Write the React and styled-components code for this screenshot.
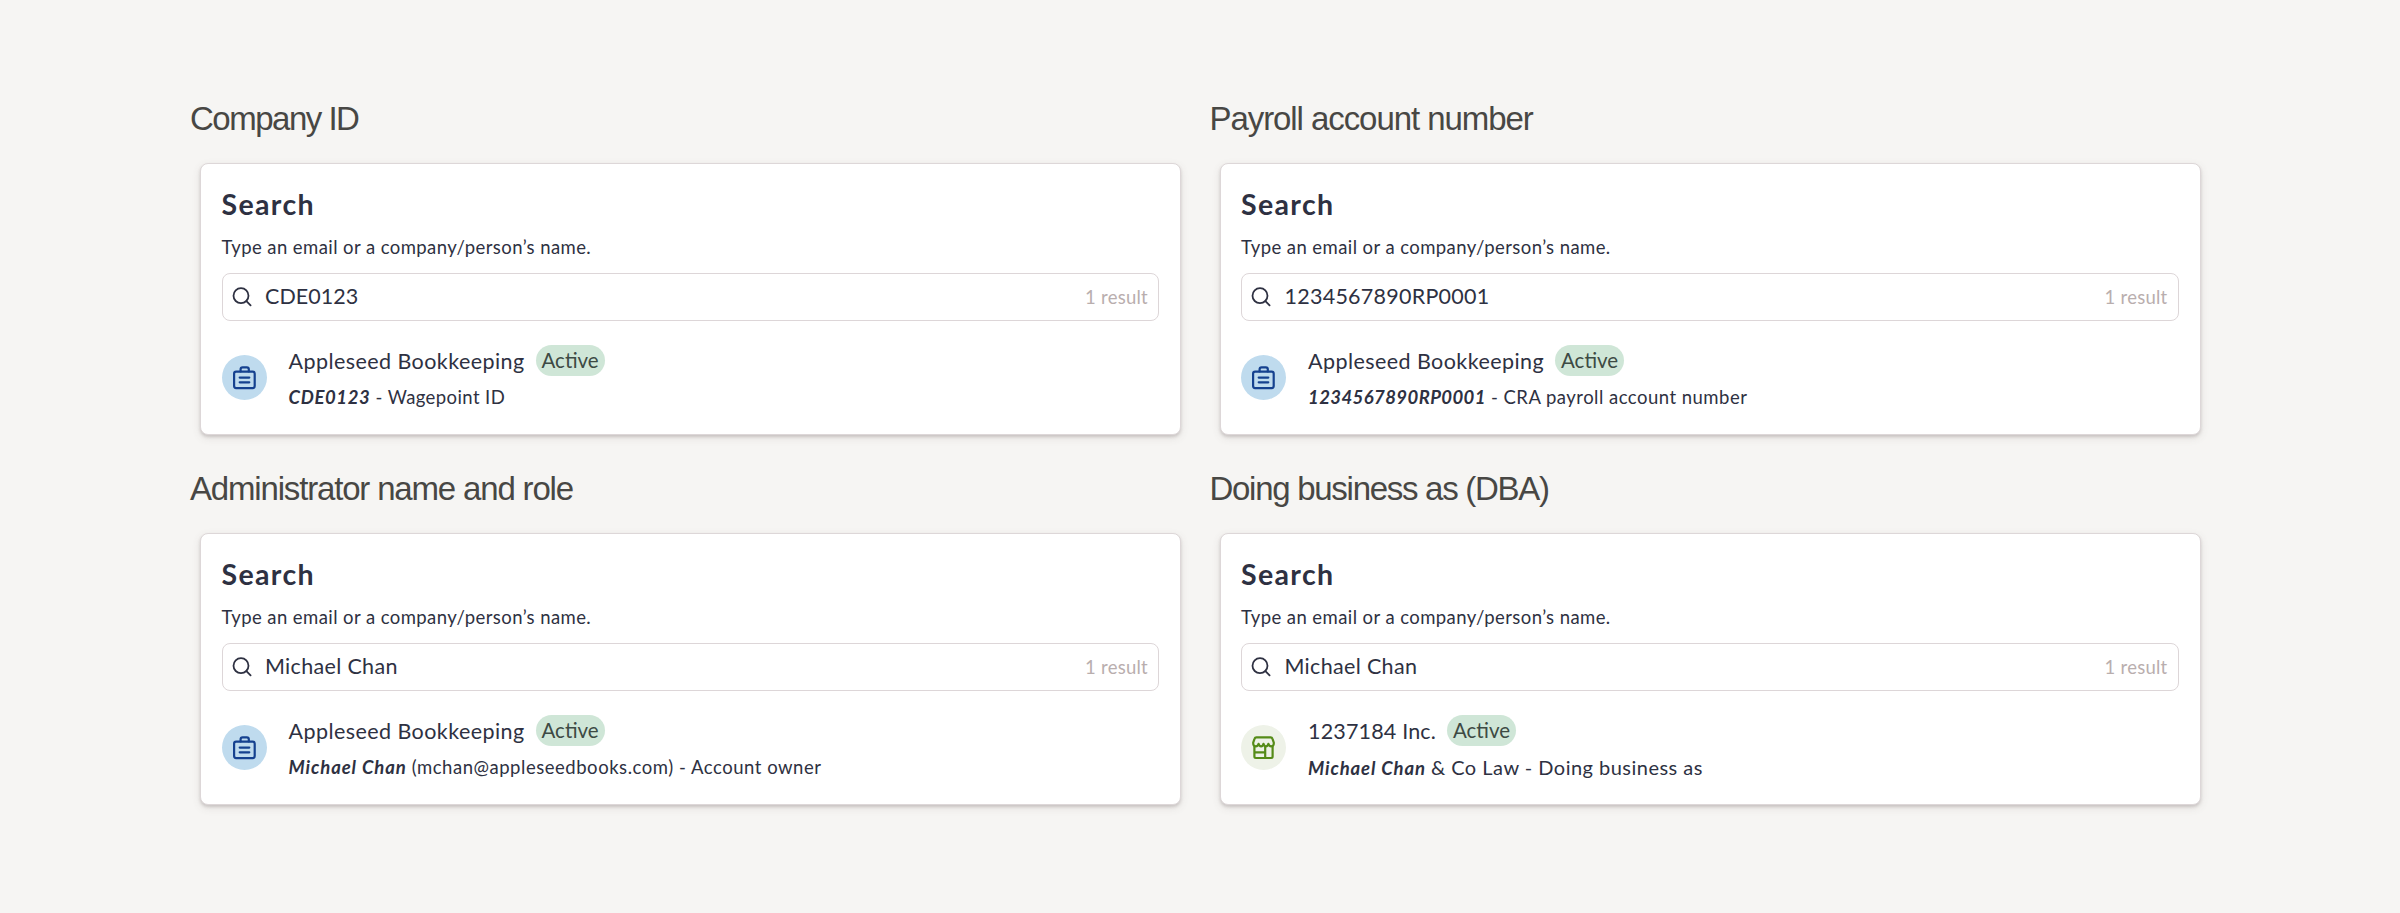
import React from 'react';
import styled, { createGlobalStyle } from 'styled-components';

const GlobalStyle = createGlobalStyle`
  * { box-sizing: border-box; }
  body { margin: 0; background: #f6f5f3; }
`;

const Page = styled.main`
  min-height: 913px;
  padding: 99px 0 0 190px;
  display: grid;
  grid-template-columns: 1019.5px 1019.5px;
  align-content: start;
  row-gap: 34px;
  background: #f6f5f3;
  color: #2e3142;
  font-family: Lato, 'Open Sans', sans-serif;
`;

const Example = styled.section`
  display: flex;
  flex-direction: column;
  gap: 24px;
`;

const ExampleTitle = styled.h2`
  margin: 0;
  font: 400 33px/40px 'Liberation Sans', sans-serif;
  letter-spacing: ${(p) => p.$tracking}px;
  color: #484744;
  white-space: nowrap;
`;

const Card = styled.article`
  width: 981px;
  height: 272px;
  margin-left: 10px;
  padding: 23.5px 21px 0 20.5px;
  display: flex;
  flex-direction: column;
  background: #fff;
  border: 1px solid #ddd7d8;
  border-radius: 8px;
  box-shadow: 0 2px 3px rgba(90, 75, 75, 0.2), 0 3px 9px rgba(90, 75, 75, 0.12);
`;

const Heading = styled.h3`
  margin: 0;
  font-size: 28.5px;
  line-height: 32px;
  font-weight: 700;
  letter-spacing: 1.35px;
`;

const Hint = styled.p`
  margin: 15.5px 0 14px;
  font-size: 18.5px;
  line-height: 24px;
  letter-spacing: 0.42px;
`;

const SearchField = styled.div`
  height: 48px;
  flex: none;
  padding: 0 10px 0 9px;
  display: flex;
  align-items: center;
  border: 1.5px solid #ddd6d8;
  border-radius: 8px;
`;

const Query = styled.span`
  flex: 1;
  margin-left: 13.5px;
  padding-bottom: 2px;
  font-size: 21.5px;
  line-height: 26px;
  letter-spacing: ${(p) => p.$tracking}px;
`;

const Count = styled.span`
  font-size: 18.5px;
  letter-spacing: 0.25px;
  color: #b9aeae;
`;

const Result = styled.div`
  margin-top: 24px;
  display: flex;
  gap: 22px;
`;

const Avatar = styled.div`
  width: 45px;
  height: 45px;
  margin-top: 10px;
  border-radius: 50%;
  background: ${(p) => (p.$kind === 'store' ? '#eef2e8' : '#bfdbee')};
  color: ${(p) => (p.$kind === 'store' ? '#558b18' : '#15418f')};
`;

const ResultBody = styled.div`
  display: flex;
  flex-direction: column;
  gap: 9px;
`;

const NameRow = styled.div`
  display: flex;
  align-items: center;
  gap: 11px;
  height: 31px;
`;

const Name = styled.span`
  font-size: 21.5px;
  letter-spacing: ${(p) => p.$tracking}px;
`;

const Status = styled.span`
  width: 69px;
  height: 31px;
  border-radius: 16px;
  background: #cfe6d7;
  color: #3d4a44;
  font-size: 20.5px;
  line-height: 30px;
  text-align: center;
`;

const Detail = styled.div`
  display: flex;
  align-items: baseline;
  gap: 5px;
  height: 24px;
  line-height: 24px;
  white-space: nowrap;
`;

const Match = styled.em`
  font-size: 18.5px;
  font-weight: 700;
  letter-spacing: ${(p) => p.$tracking}px;
`;

const Rest = styled.span`
  font-size: ${(p) => p.$size}px;
  letter-spacing: ${(p) => p.$tracking}px;
`;

const SearchIcon = () => (
  <svg width="20" height="20" viewBox="0 0 20 20" fill="none" stroke="currentColor" strokeWidth="1.8" strokeLinecap="round">
    <circle cx="9" cy="8.7" r="7.5" />
    <path d="M14.4 14.2 18.6 18.4" />
  </svg>
);

const BriefcaseIcon = () => (
  <svg width="45" height="45" viewBox="0 0 45 45" fill="none" stroke="currentColor" strokeWidth="2.2" strokeLinecap="round" strokeLinejoin="round">
    <rect x="12.1" y="16.7" width="20.6" height="16.4" rx="2" />
    <path d="M18.6 16.5v-2.2a2 2 0 0 1 2-2h4.2a2 2 0 0 1 2 2v2.2" />
    <path d="M17.7 22.6h9.6M17.7 27.3h9.6" />
  </svg>
);

const StoreIcon = () => (
  <svg width="45" height="45" viewBox="0 0 45 45" fill="none" stroke="currentColor" strokeWidth="2.2" strokeLinecap="round" strokeLinejoin="round">
    <path d="M15.4 12.3H29.6Q31 12.3 31.4 13.6L32.8 17.6Q33 21.3 30.2 21.3Q28 21.3 27.4 18.8Q26.8 21.3 24.9 21.3Q23 21.3 22.5 18.8Q22 21.3 20.1 21.3Q18.2 21.3 17.6 18.8Q17 21.3 14.8 21.3Q12 21.3 12.2 17.6L13.6 13.6Q14 12.3 15.4 12.3Z" />
    <path d="M13.4 21V31.6Q13.4 33 14.8 33H30.2Q31.6 33 31.6 31.6V21M24.2 22V33M13.4 27.4H24.2" />
  </svg>
);

const examples = [
  {
    title: 'Company ID', titleTracking: -1.5,
    query: 'CDE0123', queryTracking: 0.02,
    kind: 'firm', name: 'Appleseed Bookkeeping', nameTracking: 0.43,
    match: 'CDE0123', matchTracking: 0.65,
    rest: '- Wagepoint ID', restTracking: 0.4, restSize: 18.5,
  },
  {
    title: 'Payroll account number', titleTracking: -1.07,
    query: '1234567890RP0001', queryTracking: 0.25,
    kind: 'firm', name: 'Appleseed Bookkeeping', nameTracking: 0.43,
    match: '1234567890RP0001', matchTracking: 0.42,
    rest: '- CRA payroll account number', restTracking: 0.48, restSize: 18.5,
  },
  {
    title: 'Administrator name and role', titleTracking: -1.17,
    query: 'Michael Chan', queryTracking: 0.32,
    kind: 'firm', name: 'Appleseed Bookkeeping', nameTracking: 0.43,
    match: 'Michael Chan', matchTracking: 0.9,
    rest: '(mchan@appleseedbooks.com) - Account owner', restTracking: 0.53, restSize: 18.5,
  },
  {
    title: 'Doing business as (DBA)', titleTracking: -1.28,
    query: 'Michael Chan', queryTracking: 0.32,
    kind: 'store', name: '1237184 Inc.', nameTracking: 0.17,
    match: 'Michael Chan', matchTracking: 0.88,
    rest: '& Co Law - Doing business as', restTracking: 0.48, restSize: 20,
  },
];

export default function App() {
  return (
    <>
      <GlobalStyle />
      <Page>
        {examples.map((e) => (
          <Example key={e.title}>
            <ExampleTitle $tracking={e.titleTracking}>{e.title}</ExampleTitle>
            <Card>
              <Heading>Search</Heading>
              <Hint>Type an email or a company/person’s name.</Hint>
              <SearchField>
                <SearchIcon />
                <Query $tracking={e.queryTracking}>{e.query}</Query>
                <Count>1 result</Count>
              </SearchField>
              <Result>
                <Avatar $kind={e.kind}>
                  {e.kind === 'store' ? <StoreIcon /> : <BriefcaseIcon />}
                </Avatar>
                <ResultBody>
                  <NameRow>
                    <Name $tracking={e.nameTracking}>{e.name}</Name>
                    <Status>Active</Status>
                  </NameRow>
                  <Detail>
                    <Match $tracking={e.matchTracking}>{e.match}</Match>
                    <Rest $size={e.restSize} $tracking={e.restTracking}>{e.rest}</Rest>
                  </Detail>
                </ResultBody>
              </Result>
            </Card>
          </Example>
        ))}
      </Page>
    </>
  );
}
